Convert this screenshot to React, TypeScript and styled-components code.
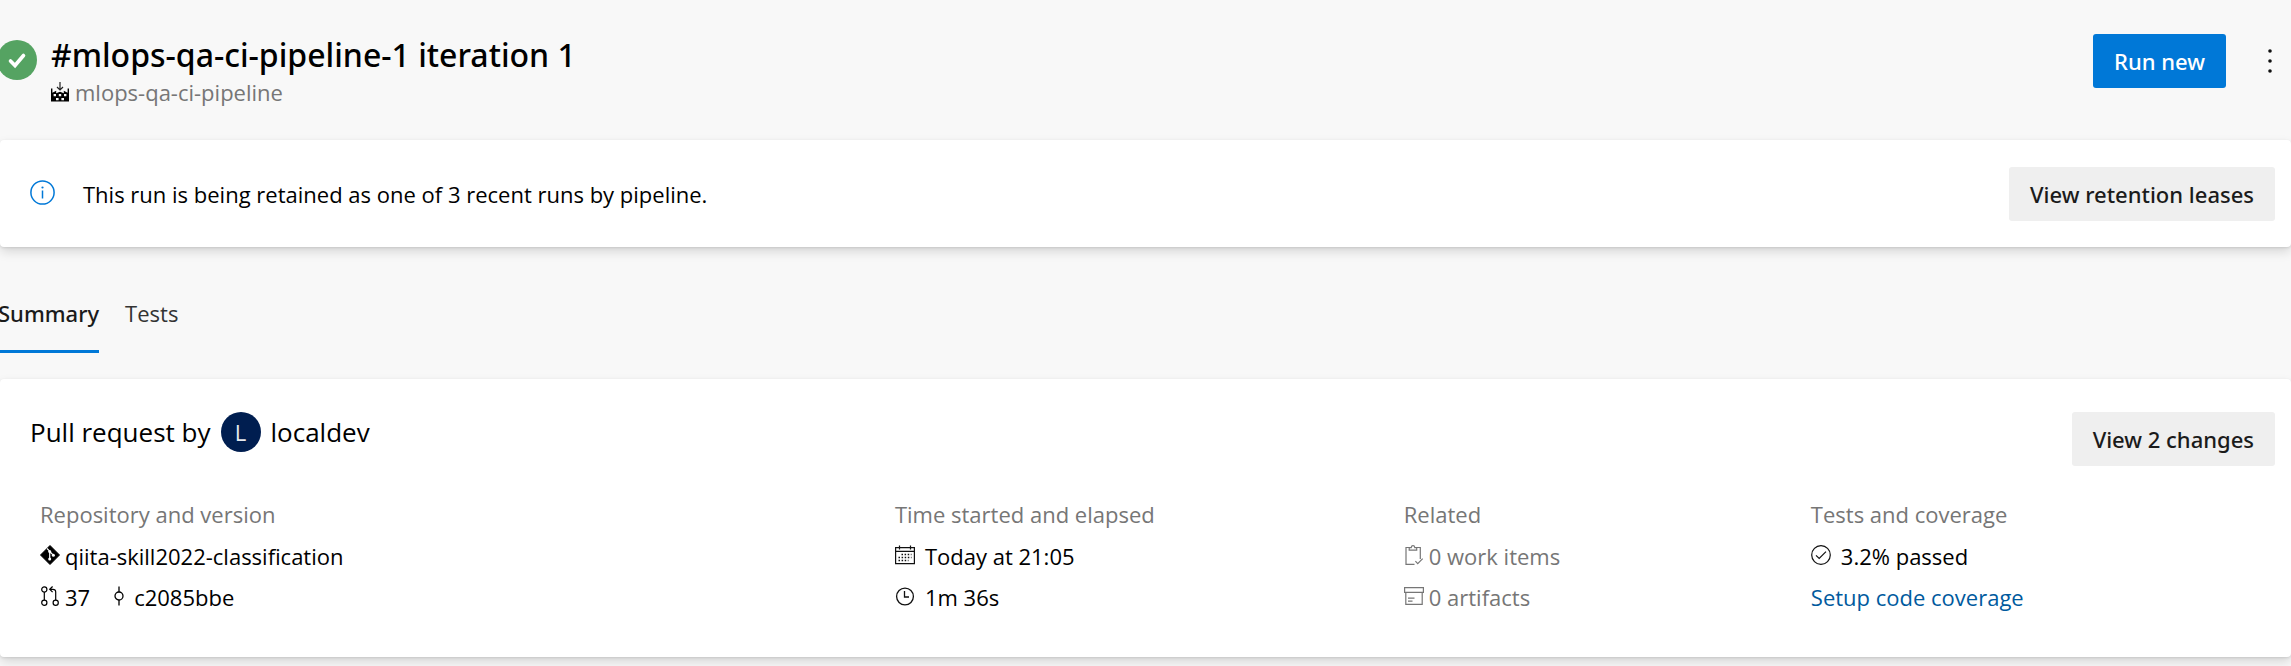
import React from 'react';
import styled, { createGlobalStyle } from 'styled-components';

const GlobalStyle = createGlobalStyle`
  *, *::before, *::after { box-sizing: border-box; }
  body {
    margin: 0;
    background: #f8f8f8;
    color: #000;
    font-family: 'Open Sans', 'Noto Sans', sans-serif;
    font-size: 22px;
    line-height: 32px;
  }
  svg { display: block; flex: none; }
`;

const strong = `
  font-family: 'Noto Sans', 'Open Sans', sans-serif;
  font-weight: 500;
`;

const Page = styled.div`
  display: flex;
  flex-direction: column;
  padding-bottom: 9px;
  overflow: hidden;
`;

const Header = styled.header`
  display: flex;
  align-items: flex-start;
  padding: 34px 0 32px;
`;

const StatusBadge = styled.div`
  flex: none;
  margin: 6px 14px 0 -3px;
`;

const Titles = styled.div`
  flex: 1;
  min-width: 0;
`;

const Title = styled.h1`
  ${strong}
  margin: 0;
  font-size: 32px;
  line-height: 42px;
`;

const PipelineLink = styled.a`
  display: flex;
  align-items: center;
  gap: 6px;
  width: fit-content;
  height: 32px;
  color: #767676;
  text-decoration: none;
`;

const HeaderActions = styled.div`
  display: flex;
  align-items: center;
  gap: 23px;
`;

const Button = styled.button<{ $primary?: boolean }>`
  ${strong}
  flex: none;
  height: 54px;
  padding: 0 21px;
  border: 0;
  border-radius: 3px;
  font-size: 22px;
  line-height: 32px;
  white-space: nowrap;
  color: ${({ $primary }) => ($primary ? '#fff' : '#1b1b1b')};
  background: ${({ $primary }) => ($primary ? '#0078d7' : '#efefef')};
`;

const MoreButton = styled.button`
  display: flex;
  align-items: center;
  justify-content: center;
  width: 42px;
  height: 54px;
  padding: 0;
  border: 0;
  background: none;
`;

const Card = styled.section`
  background: #fff;
  border-radius: 4px;
  box-shadow: 0 5px 11px rgba(0, 0, 0, 0.13), 0 1px 3px rgba(0, 0, 0, 0.11);
`;

const Banner = styled(Card)`
  display: flex;
  align-items: center;
  padding: 27px 16px 26px 30px;
`;

const BannerText = styled.p`
  flex: 1;
  margin: 0 0 0 27px;
`;

const Tabs = styled.nav`
  display: flex;
  gap: 26px;
  margin: 36px 0 26px -2px;
`;

const Tab = styled.a<{ $active?: boolean }>`
  ${({ $active }) => ($active ? strong : '')}
  padding: 14px 0 21px;
  border-bottom: 3px solid ${({ $active }) => ($active ? '#0078d7' : 'transparent')};
  color: ${({ $active }) => ($active ? '#1b1b1b' : '#333')};
  text-decoration: none;
`;

const Summary = styled(Card)`
  padding: 33px 0 40px;
`;

const SummaryHeader = styled.div`
  display: flex;
  align-items: flex-start;
  justify-content: space-between;
  margin-bottom: 28px;
  padding: 0 16px 0 30px;
`;

const Requester = styled.h2`
  display: flex;
  align-items: center;
  margin: 0;
  height: 40px;
  font-size: 26px;
  font-weight: 400;
`;

const Avatar = styled.span`
  display: flex;
  align-items: center;
  justify-content: center;
  width: 40px;
  height: 40px;
  margin: 0 10px;
  border-radius: 50%;
  background: #001e50;
  color: #e6e9ee;
  font-size: 22px;
`;

const Facts = styled.div`
  display: grid;
  grid-template-columns: 2.1fr 1.25fr 1fr 1.15fr;
  padding: 0 12px 0 40px;
`;

const Fact = styled.div`
  min-width: 0;
`;

const Label = styled.h3`
  margin: 0;
  color: #767676;
  font-size: 22px;
  font-weight: 400;
  line-height: 41px;
`;

const Line = styled.div<{ $gap?: number; $muted?: boolean }>`
  display: flex;
  align-items: center;
  gap: ${({ $gap }) => $gap ?? 5}px;
  height: 41px;
  color: ${({ $muted }) => ($muted ? '#767676' : '#000')};

  svg { margin-bottom: 2px; }
`;

const PlainLink = styled.a`
  display: flex;
  align-items: center;
  gap: 5px;
  color: inherit;
  text-decoration: none;

  & + & { gap: 10px; margin-left: 24px; }
`;

const SetupLink = styled.a`
  color: #005a9e;
  text-decoration: none;
`;

const SuccessIcon = () => (
  <svg width="40" height="40" viewBox="0 0 40 40" role="img" aria-label="Succeeded">
    <circle cx="20" cy="20" r="20" fill="#55a362" />
    <path d="M13.500 21l4.500 4.500 8.500-10" fill="none" stroke="#fff" strokeWidth="3.600" strokeLinecap="round" />
  </svg>
);

const BuildIcon = () => (
  <svg width="18" height="20" viewBox="0 0 18 20" aria-hidden="true">
    <path d="M9 0v8M6 5l3 3 3-3" fill="none" stroke="#222" strokeWidth="1.200" />
    <path fillRule="evenodd" d="M0 6.500h1.400v4.300l3.800-2v2.400L9 9.800l3.800 1.400V8.800l3.800 2V6.500H18v13H0zM2.600 12v2.200h2.400v-2.200zM7.800 12v2.200h2.400v-2.200zM13 12v2.200h2.400v-2.200zM5 16v2.200h2.600v-2.200zM10.400 16v2.200H13v-2.200z" fill="#000" />
  </svg>
);

const InfoIcon = () => (
  <svg width="26" height="28" viewBox="0 0 26 28" fill="none" stroke="#0078d7" aria-hidden="true">
    <circle cx="12.500" cy="12.500" r="11.600" strokeWidth="1.500" />
    <path d="M12.500 10.500v8" strokeWidth="1.500" />
    <circle cx="12.500" cy="7.500" r="1.100" fill="#0078d7" stroke="none" />
  </svg>
);

const MoreIcon = () => (
  <svg width="6" height="26" viewBox="0 0 6 26" fill="#111" aria-hidden="true">
    <circle cx="3" cy="3" r="1.800" />
    <circle cx="3" cy="13" r="1.800" />
    <circle cx="3" cy="23" r="1.800" />
  </svg>
);

const GitIcon = () => (
  <svg width="20" height="20" viewBox="0 0 20 20" aria-hidden="true">
    <path d="M10 .5L19.500 10 10 19.500.500 10z" fill="#000" stroke="#000" strokeLinejoin="round" />
    <path d="M7 3.500l2.700 2.700v8M9.700 6.500l3.600 3.700" fill="none" stroke="#fff" strokeWidth="1.200" />
    <circle cx="9.700" cy="6.400" r="1.500" fill="#fff" />
    <circle cx="9.700" cy="14" r="1.500" fill="#fff" />
    <circle cx="13.400" cy="10.300" r="1.500" fill="#fff" />
  </svg>
);

const PullRequestIcon = () => (
  <svg width="20" height="20" viewBox="0 0 20 20" fill="none" stroke="#000" strokeWidth="1.200" aria-hidden="true">
    <circle cx="4.300" cy="3.400" r="2.600" />
    <circle cx="4.300" cy="16.800" r="2.600" />
    <circle cx="15.700" cy="16.800" r="2.600" />
    <path d="M4.300 6v8.200M15.700 14.200V6c0-1.800-1-2.700-2.700-2.700H9.700M12.600.500L9.700 3.300l2.900 2.800" />
  </svg>
);

const CommitIcon = () => (
  <svg width="10" height="20" viewBox="0 0 10 20" fill="none" stroke="#000" strokeWidth="1.300" aria-hidden="true">
    <circle cx="5" cy="10" r="4" />
    <path d="M5 .5V6M5 14v5.500" />
  </svg>
);

const CalendarIcon = () => (
  <svg width="20" height="20" viewBox="0 0 20 20" fill="none" stroke="#111" strokeWidth="1.200" aria-hidden="true">
    <path d="M.6 2.600h18.800v16H.6zM.6 6.400h18.800M4.500.400v4M15.500.400v4" />
    <path d="M6.500 9.500h10M3.500 12.500h13M3.500 15.500h10" strokeWidth="1.400" strokeDasharray="1.500 1.600" />
  </svg>
);

const ClockIcon = () => (
  <svg width="20" height="20" viewBox="0 0 20 20" fill="none" stroke="#111" strokeWidth="1.300" aria-hidden="true">
    <circle cx="10" cy="10.500" r="8.400" />
    <path d="M9.500 5v6H14" />
  </svg>
);

const WorkItemIcon = () => (
  <svg width="20" height="20" viewBox="0 0 20 20" fill="none" stroke="#767676" strokeWidth="1.200" aria-hidden="true">
    <path d="M10.500 19.300H2V2.500h3.200M12.500 2.500h3.800V14" />
    <path d="M5.200 5.200V2.600h2C7.400 1.200 8 .7 9 .7s1.600.5 1.800 1.900h1.900v2.600z" />
    <path d="M11.400 16.200l2.300 2.400 5-5" />
  </svg>
);

const ArtifactIcon = () => (
  <svg width="20" height="20" viewBox="0 0 20 20" fill="none" stroke="#767676" strokeWidth="1.200" aria-hidden="true">
    <path d="M.6 1.600h18.800v4.800H.6zM1.800 6.400v12h16.400v-12M4 12.200h6.500M4 15.200h4.500" />
  </svg>
);

const PassedIcon = () => (
  <svg width="20" height="20" viewBox="0 0 20 20" fill="none" stroke="#111" strokeWidth="1.200" aria-hidden="true">
    <circle cx="10" cy="10" r="9.300" />
    <path d="M5 10.300l3.200 3.200L15 6.600" />
  </svg>
);

export default function App() {
  return (
    <>
      <GlobalStyle />
      <Page>
        <Header>
          <StatusBadge><SuccessIcon /></StatusBadge>
          <Titles>
            <Title>#mlops-qa-ci-pipeline-1 iteration 1</Title>
            <PipelineLink href="#pipeline"><BuildIcon />mlops-qa-ci-pipeline</PipelineLink>
          </Titles>
          <HeaderActions>
            <Button type="button" $primary>Run new</Button>
            <MoreButton type="button" aria-label="More actions"><MoreIcon /></MoreButton>
          </HeaderActions>
        </Header>

        <Banner>
          <InfoIcon />
          <BannerText>This run is being retained as one of 3 recent runs by pipeline.</BannerText>
          <Button type="button">View retention leases</Button>
        </Banner>

        <Tabs>
          <Tab href="#summary" aria-current="page" $active>Summary</Tab>
          <Tab href="#tests">Tests</Tab>
        </Tabs>

        <Summary>
          <SummaryHeader>
            <Requester>Pull request by<Avatar>L</Avatar>localdev</Requester>
            <Button type="button">View 2 changes</Button>
          </SummaryHeader>
          <Facts>
            <Fact>
              <Label>Repository and version</Label>
              <Line><PlainLink href="#repository"><GitIcon />qiita-skill2022-classification</PlainLink></Line>
              <Line $gap={0}>
                <PlainLink href="#pull-request"><PullRequestIcon />37</PlainLink>
                <PlainLink href="#commit"><CommitIcon />c2085bbe</PlainLink>
              </Line>
            </Fact>
            <Fact>
              <Label>Time started and elapsed</Label>
              <Line $gap={10}><CalendarIcon />Today at 21:05</Line>
              <Line $gap={10}><ClockIcon />1m 36s</Line>
            </Fact>
            <Fact>
              <Label>Related</Label>
              <Line $muted><WorkItemIcon />0 work items</Line>
              <Line $muted><ArtifactIcon />0 artifacts</Line>
            </Fact>
            <Fact>
              <Label>Tests and coverage</Label>
              <Line $gap={10}><PassedIcon />3.2% passed</Line>
              <Line><SetupLink href="#coverage">Setup code coverage</SetupLink></Line>
            </Fact>
          </Facts>
        </Summary>
      </Page>
    </>
  );
}
